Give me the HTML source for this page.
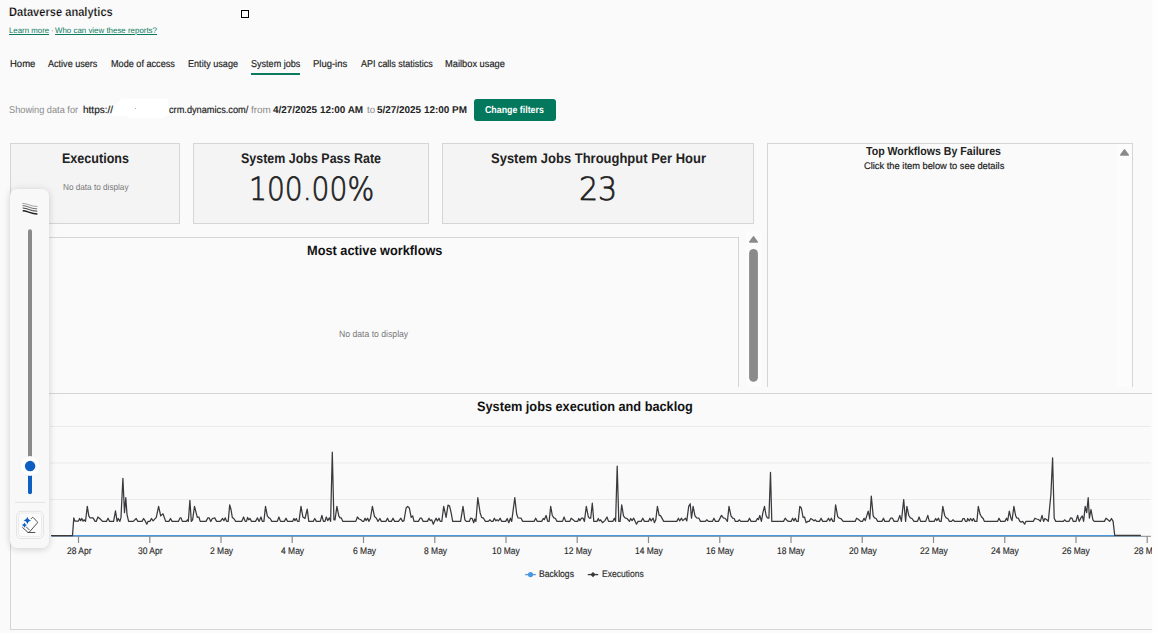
<!DOCTYPE html>
<html><head><meta charset="utf-8"><title>Dataverse analytics</title>
<style>
html,body{margin:0;padding:0;}
body{width:1158px;height:633px;overflow:hidden;background:#fefefe;font-family:"Liberation Sans",sans-serif;position:relative;}
#page{position:absolute;left:0;top:0;width:1152px;height:633px;background:#fafafa;overflow:hidden;}
.t{position:absolute;white-space:nowrap;line-height:1;transform-origin:0 0;}
.ax{font-size:9.6px;color:#2a2a2a;-webkit-text-stroke:0.15px #2a2a2a;}
#uline{position:absolute;left:251px;top:73px;width:49px;height:2px;background:#0b7a5e;}
#btn{position:absolute;left:474px;top:99px;width:82px;height:22px;background:#03785c;border-radius:3px;}
#sq{position:absolute;left:240px;top:9px;width:10px;height:10px;background:#fff;}
#sq i{position:absolute;left:1px;top:1px;width:6px;height:6px;border:1px solid #000;background:#fff;}
.card{position:absolute;top:143px;height:80.5px;background:#f4f4f4;border:1px solid #d5d5d5;box-sizing:border-box;}
.pan{position:absolute;box-sizing:border-box;border:1px solid #d5d5d5;background:#fafafa;}
#slider{position:absolute;left:10px;top:189px;width:39px;height:358.5px;border-radius:7px;background:#f8f8f8;box-shadow:0 0 10px rgba(0,0,0,.09),0 2px 6px rgba(0,0,0,.09);}
</style></head><body>
<div id="page">
<div id="sq"><i></i></div>
<div id="uline"></div>
<svg id="blob" width="70" height="26" viewBox="106 95 70 26" style="position:absolute;left:106px;top:95px"><path d="M122.8 98.9 L168 98.9 L168 105.8 L169.4 105.8 L169.4 115.5 L164.2 115.8 L164.2 117.7 L128 117.7 L127.3 115.8 L112.1 115.8 L112.1 107.5 L115.9 105.1 L118 102.4 L120.7 100.3 Z" fill="#fff" stroke="#fff" stroke-width="0.8" stroke-linejoin="round"/><rect x="135" y="108" width="1" height="1" fill="#7db4f2"/></svg>
<div id="btn"></div>

<div class="card" style="left:10px;width:170px"></div>
<div class="card" style="left:193px;width:236px"></div>
<div class="card" style="left:442px;width:312px"></div>

<div class="pan" id="maw" style="left:10px;top:237px;width:729px;height:150px;border-bottom:none;border-left:none"></div>
<div class="pan" id="twf" style="left:767px;top:143px;width:366px;height:244px;border-bottom:none"></div>
<div class="pan" id="chart" style="left:10px;top:393px;width:1160px;height:237px;border-right:none"></div>

<svg id="svg" width="1152" height="633" style="position:absolute;left:0;top:0">
<g stroke="#ebebeb" stroke-width="1">
<line x1="50" y1="426.5" x2="1151" y2="426.5"/><line x1="50" y1="463" x2="1151" y2="463"/><line x1="50" y1="499.5" x2="1151" y2="499.5"/>
</g>
<line x1="52" y1="536.3" x2="1151" y2="536.3" stroke="#8a8a8a" stroke-width="1"/>
<line x1="78.5" y1="536" x2="78.5" y2="543" stroke="#8a8a8a" stroke-width="1.2"/><line x1="149.8" y1="536" x2="149.8" y2="543" stroke="#8a8a8a" stroke-width="1.2"/><line x1="221.0" y1="536" x2="221.0" y2="543" stroke="#8a8a8a" stroke-width="1.2"/><line x1="292.2" y1="536" x2="292.2" y2="543" stroke="#8a8a8a" stroke-width="1.2"/><line x1="363.5" y1="536" x2="363.5" y2="543" stroke="#8a8a8a" stroke-width="1.2"/><line x1="434.8" y1="536" x2="434.8" y2="543" stroke="#8a8a8a" stroke-width="1.2"/><line x1="506.0" y1="536" x2="506.0" y2="543" stroke="#8a8a8a" stroke-width="1.2"/><line x1="577.2" y1="536" x2="577.2" y2="543" stroke="#8a8a8a" stroke-width="1.2"/><line x1="648.5" y1="536" x2="648.5" y2="543" stroke="#8a8a8a" stroke-width="1.2"/><line x1="719.8" y1="536" x2="719.8" y2="543" stroke="#8a8a8a" stroke-width="1.2"/><line x1="791.0" y1="536" x2="791.0" y2="543" stroke="#8a8a8a" stroke-width="1.2"/><line x1="862.2" y1="536" x2="862.2" y2="543" stroke="#8a8a8a" stroke-width="1.2"/><line x1="933.5" y1="536" x2="933.5" y2="543" stroke="#8a8a8a" stroke-width="1.2"/><line x1="1004.8" y1="536" x2="1004.8" y2="543" stroke="#8a8a8a" stroke-width="1.2"/><line x1="1076.0" y1="536" x2="1076.0" y2="543" stroke="#8a8a8a" stroke-width="1.2"/><line x1="1147.2" y1="536" x2="1147.2" y2="543" stroke="#8a8a8a" stroke-width="1.2"/>
<line x1="51" y1="535.7" x2="1141" y2="535.7" stroke="#4a98e0" stroke-width="1.3"/>
<polyline fill="none" stroke="#3a3a3e" stroke-width="1.25" stroke-linejoin="round" points="51,535.6 52.7,535.6 72.5,535.6 73.8,517.9 74.9,521.1 76.4,521.1 78.5,521.1 79.6,518.5 80.7,520.6 81.8,518.5 83.1,521.1 84.0,519.8 85.5,521.4 87.3,506.4 88.8,515.9 89.9,517.8 93.0,517.9 95.1,521.4 96.2,521.4 97.9,517.0 100.2,519.0 102.5,521.4 106.5,521.4 108.1,518.2 109.6,521.4 113.6,521.4 115.5,510.8 117.1,521.4 118.3,518.5 119.9,521.4 121.0,517.4 122.9,478.4 124.5,512.7 125.8,497.7 127.0,514.3 128.6,521.4 133.3,521.4 136.2,518.5 137.8,521.4 142.0,521.4 143.6,518.5 145.2,520.9 146.8,524.2 148.0,521.4 149.9,521.4 151.5,518.5 153.1,520.9 156.3,517.4 158.6,506.4 160.7,515.9 163.0,513.8 165.7,521.4 168.9,521.4 170.5,518.5 172.1,521.4 178.4,521.4 180.0,517.9 181.1,517.9 182.3,521.4 186.3,521.4 187.4,519.8 188.3,521.4 189.9,500.4 191.3,521.4 192.6,519.8 194.5,506.4 197.3,517.4 198.9,517.0 200.2,521.4 206.0,521.4 207.9,517.9 209.2,517.9 210.8,521.4 212.4,518.5 214.7,517.9 216.6,521.4 220.3,521.4 222.6,518.5 223.9,520.6 225.3,517.9 226.6,521.4 228.2,521.4 229.7,504.8 231.0,509.5 232.3,517.4 233.8,518.5 235.7,521.4 241.7,521.4 243.6,517.0 245.2,521.4 246.5,521.4 247.6,517.4 248.7,519.8 250.0,518.5 251.5,521.4 255.5,521.4 257.5,517.9 259.1,521.4 261.0,517.0 262.3,521.4 263.9,521.4 265.5,506.4 267.3,515.9 268.9,517.9 270.2,518.5 271.8,521.4 277.3,521.4 278.9,517.0 280.5,521.4 284.4,521.4 286.0,518.2 287.6,521.4 292.6,521.4 293.9,518.5 295.0,520.6 296.3,518.5 297.4,521.4 299.0,521.4 301.0,506.4 302.9,517.0 305.0,518.5 307.2,509.2 308.8,521.4 313.2,521.4 314.8,518.5 316.3,521.4 320.3,521.4 321.9,515.4 323.4,521.4 325.0,521.4 326.3,517.0 327.7,520.6 329.3,517.9 330.6,521.4 332.3,452.2 333.9,519.8 335.0,519.8 336.9,506.4 338.8,515.9 340.0,517.9 341.3,517.9 342.9,521.4 355.8,521.4 357.4,517.0 359.0,519.0 360.6,519.5 362.5,521.4 363.7,521.4 365.0,518.2 366.1,520.6 367.7,518.2 368.8,521.4 370.4,518.5 372.4,506.4 374.5,516.6 376.4,518.2 378.0,521.4 379.9,518.5 381.4,521.4 385.9,521.4 387.5,518.2 389.0,521.4 391.4,521.4 393.0,518.2 394.6,521.4 398.5,521.4 400.9,518.2 402.5,521.4 404.0,520.6 406.1,508.0 407.7,506.4 409.3,508.0 411.2,517.4 412.7,515.9 414.0,521.4 418.4,521.4 420.0,518.2 421.6,518.2 423.2,521.4 427.4,521.4 429.0,518.2 430.3,520.6 431.7,519.8 433.3,524.2 434.9,520.6 436.1,518.2 437.4,520.9 439.0,518.2 440.2,521.4 441.8,521.4 443.7,506.4 446.1,517.4 448.0,505.1 449.6,506.1 451.1,512.7 452.7,521.4 460.6,521.4 463.0,506.4 464.9,519.8 466.2,521.4 469.3,521.4 470.6,518.2 472.2,518.5 473.7,522.7 474.8,519.0 475.9,521.4 477.8,497.7 480.1,512.7 481.6,517.4 483.5,518.2 485.4,521.4 488.3,521.4 489.9,519.8 491.4,521.4 493.0,521.4 494.3,518.2 495.9,520.9 497.0,519.8 498.5,520.9 500.1,518.2 501.7,521.4 505.7,521.4 507.2,518.5 508.8,522.7 510.4,518.2 511.7,521.4 514.8,497.7 516.7,514.3 518.0,517.9 521.1,518.2 522.7,521.4 534.1,521.4 535.7,518.2 537.3,521.4 541.7,521.4 543.3,518.5 544.4,519.5 546.1,515.5 547.7,521.4 549.1,521.4 550.7,506.4 552.3,515.5 553.9,517.9 555.4,518.5 557.0,521.4 562.5,521.4 564.1,517.0 565.7,521.4 569.7,521.4 571.2,518.2 572.8,519.5 574.9,521.4 577.6,521.4 578.8,518.5 579.9,520.6 581.5,518.2 583.1,518.2 584.4,521.4 586.3,506.4 588.3,516.6 589.4,518.2 590.7,518.2 592.3,503.2 593.8,521.4 597.0,521.4 598.3,518.5 599.4,520.9 600.6,519.8 602.5,522.7 604.9,520.6 607.0,517.0 608.5,521.4 612.8,521.4 614.4,518.2 615.6,521.4 617.2,466.1 618.8,521.4 620.1,521.4 621.7,504.8 623.5,515.9 625.1,517.9 627.0,518.5 629.4,521.4 630.7,518.5 632.1,520.6 633.7,518.2 636.5,524.2 638.1,521.4 641.2,521.4 642.8,518.2 644.4,521.4 648.4,521.4 649.9,518.2 651.2,520.9 653.1,518.2 654.4,522.7 655.8,519.8 657.4,506.4 659.1,515.1 660.7,515.9 663.7,521.4 676.8,521.4 678.4,518.2 679.7,520.9 681.5,518.2 682.8,520.6 685.5,518.2 686.8,520.9 688.7,506.4 690.2,503.7 691.5,518.2 693.1,506.4 695.0,515.9 696.6,517.9 698.9,518.2 700.5,521.4 705.3,521.4 706.8,519.8 708.4,521.4 712.4,521.4 713.9,518.2 715.5,521.4 718.4,521.4 721.5,515.4 723.4,517.9 725.3,518.5 727.4,521.4 729.0,506.4 731.0,515.9 732.6,518.2 734.2,518.5 735.4,521.4 738.0,521.4 739.2,519.8 740.8,521.4 747.9,521.4 749.5,518.2 751.1,521.4 755.8,521.4 757.4,518.5 758.5,519.5 759.8,515.5 761.4,521.4 762.9,512.7 764.5,506.4 766.1,515.5 767.4,517.9 768.9,518.2 770.5,472.4 771.8,521.4 780.0,521.4 783.5,521.4 785.2,518.2 787.1,520.6 788.7,521.4 791.1,521.4 792.6,518.2 793.9,520.9 795.3,518.2 796.6,521.4 798.2,521.4 799.8,506.4 801.3,508.0 803.1,517.4 804.5,517.0 806.1,522.7 807.7,521.4 809.2,521.4 810.8,518.5 812.4,519.5 814.0,520.9 815.2,519.8 816.7,521.4 819.5,521.4 821.1,518.2 822.7,521.4 826.6,521.4 828.5,518.2 829.8,520.9 831.4,518.2 832.9,521.4 834.2,521.4 835.6,504.8 837.7,516.6 839.3,518.2 840.8,518.5 843.2,521.4 855.1,521.4 856.6,518.2 858.5,519.5 860.6,521.4 862.5,521.4 864.1,518.2 865.3,520.6 868.2,511.1 869.8,519.0 871.3,496.1 873.2,515.9 874.5,517.9 876.1,518.5 877.7,521.4 881.9,521.4 883.5,518.2 884.8,521.4 889.0,521.4 890.6,518.2 892.5,518.2 894.1,521.4 897.7,521.4 899.8,515.4 901.4,521.4 903.7,499.6 905.6,521.4 906.9,506.4 908.8,515.5 910.4,517.9 912.0,518.5 914.0,521.4 917.5,521.4 919.1,517.0 920.6,521.4 925.7,521.4 927.8,515.4 929.3,521.4 934.1,521.4 935.7,518.5 936.8,520.6 938.5,518.2 939.6,521.4 941.2,521.4 942.8,506.4 944.7,515.5 946.2,517.9 947.8,518.5 949.4,521.4 951.5,521.4 953.0,519.8 954.6,521.4 961.7,521.4 963.0,518.5 964.3,518.5 965.4,521.4 967.0,521.4 967.7,518.5 969.3,520.9 970.6,518.5 972.2,520.9 973.4,518.5 974.9,521.4 976.9,521.4 978.3,506.4 980.1,514.3 981.6,517.0 983.2,518.5 984.3,521.4 997.5,521.4 999.0,518.2 1000.6,521.4 1004.9,521.4 1006.5,518.2 1007.7,520.6 1009.3,511.1 1010.9,518.2 1012.0,520.6 1013.9,506.4 1015.6,515.5 1016.7,517.9 1018.3,518.2 1019.9,521.4 1021.2,522.2 1022.7,521.4 1024.6,524.2 1025.9,521.4 1033.3,521.4 1034.9,518.2 1036.5,519.0 1038.5,519.5 1040.4,521.4 1042.0,515.4 1043.6,521.4 1044.9,518.5 1046.8,519.8 1048.3,521.4 1050.9,494.5 1052.6,457.9 1054.2,518.2 1055.8,521.4 1063.3,521.4 1064.6,519.8 1066.2,521.4 1068.9,521.4 1070.5,517.9 1072.0,518.2 1073.3,521.4 1076.0,521.4 1077.6,515.4 1079.2,521.4 1080.7,518.2 1082.3,515.9 1083.6,521.4 1085.2,506.4 1086.7,512.7 1088.2,497.7 1089.4,518.2 1091.0,509.5 1092.9,519.8 1094.2,521.4 1104.4,521.4 1106.0,518.2 1107.6,519.5 1109.7,521.4 1111.5,518.5 1113.1,521.4 1114.7,535.3 1140.8,535.3"/>
<rect x="746" y="231" width="15" height="156" fill="#fcfcfc"/>
<rect x="1117" y="144" width="15" height="243" fill="#fcfcfc"/>
<g fill="#8a8a8a" stroke="#8a8a8a" stroke-width="1.6" stroke-linejoin="round">
<path d="M749.8 242 L753.5 236.9 L757.2 242 Z"/>
<path d="M1120.8 155 L1124.5 149.9 L1128.2 155 Z"/>
</g>
<rect x="749.1" y="249" width="8.8" height="132.8" rx="4.4" fill="#8a8a8a"/>
<line x1="525.2" y1="574.6" x2="535.8" y2="574.6" stroke="#4a98e0" stroke-width="1.3"/><circle cx="530.5" cy="574.6" r="2.6" fill="#4a98e0"/>
<line x1="587.8" y1="574.6" x2="598.2" y2="574.6" stroke="#3a3a3e" stroke-width="1.3"/><path d="M593 572 L595.6 574.6 L593 577.2 L590.4 574.6 Z" fill="#3a3a3e"/>
</svg>

<div class="t" id="title" style="left:8.90px;top:5.92px;font-size:12.5px;font-weight:bold;color:#0c0c0c;-webkit-text-stroke:0.22px #fafafa;transform:scaleX(0.8889) rotate(.03deg)">Dataverse analytics</div>
<div class="t" id="l1" style="left:8.50px;top:26.63px;font-size:8px;font-weight:normal;color:#0b7a5e;text-decoration:underline;transform:scaleX(0.9806) rotate(.03deg)">Learn more</div>
<div class="t" id="ldot" style="left:50.80px;top:26.63px;font-size:8px;font-weight:normal;color:#555;transform:scaleX(1.0000) rotate(.03deg)">·</div>
<div class="t" id="l2" style="left:55.30px;top:26.63px;font-size:8px;font-weight:normal;color:#0b7a5e;text-decoration:underline;transform:scaleX(0.9884) rotate(.03deg)">Who can view these reports?</div>
<div class="t" id="tab1" style="left:10.30px;top:58.63px;font-size:10.0px;font-weight:normal;color:#1c1c1c;-webkit-text-stroke:0.18px #1c1c1c;transform:scaleX(0.9506) rotate(.03deg)">Home</div>
<div class="t" id="tab2" style="left:47.90px;top:58.63px;font-size:10.0px;font-weight:normal;color:#1c1c1c;-webkit-text-stroke:0.18px #1c1c1c;transform:scaleX(0.9060) rotate(.03deg)">Active users</div>
<div class="t" id="tab3" style="left:111.10px;top:58.63px;font-size:10.0px;font-weight:normal;color:#1c1c1c;-webkit-text-stroke:0.18px #1c1c1c;transform:scaleX(0.9116) rotate(.03deg)">Mode of access</div>
<div class="t" id="tab4" style="left:188.10px;top:58.63px;font-size:10.0px;font-weight:normal;color:#1c1c1c;-webkit-text-stroke:0.18px #1c1c1c;transform:scaleX(0.9093) rotate(.03deg)">Entity usage</div>
<div class="t" id="tab5" style="left:251.10px;top:58.63px;font-size:10.0px;font-weight:normal;color:#1c1c1c;-webkit-text-stroke:0.18px #1c1c1c;transform:scaleX(0.9060) rotate(.03deg)">System jobs</div>
<div class="t" id="tab6" style="left:312.90px;top:58.63px;font-size:10.0px;font-weight:normal;color:#1c1c1c;-webkit-text-stroke:0.18px #1c1c1c;transform:scaleX(0.9450) rotate(.03deg)">Plug-ins</div>
<div class="t" id="tab7" style="left:360.50px;top:58.63px;font-size:10.0px;font-weight:normal;color:#1c1c1c;-webkit-text-stroke:0.18px #1c1c1c;transform:scaleX(0.8951) rotate(.03deg)">API calls statistics</div>
<div class="t" id="tab8" style="left:445.10px;top:58.63px;font-size:10.0px;font-weight:normal;color:#1c1c1c;-webkit-text-stroke:0.18px #1c1c1c;transform:scaleX(0.9296) rotate(.03deg)">Mailbox usage</div>
<div class="t" id="f1" style="left:9.30px;top:105.22px;font-size:9.9px;font-weight:normal;color:#8a8a8a;transform:scaleX(0.9324) rotate(.03deg)">Showing data for</div>
<div class="t" id="f2" style="left:82.50px;top:105.22px;font-size:9.9px;font-weight:normal;color:#1c1c1c;-webkit-text-stroke:0.18px #1c1c1c;transform:scaleX(1.0145) rotate(.03deg)">https://</div>
<div class="t" id="f3" style="left:169.30px;top:105.22px;font-size:9.9px;font-weight:normal;color:#1c1c1c;-webkit-text-stroke:0.18px #1c1c1c;transform:scaleX(0.9318) rotate(.03deg)">crm.dynamics.com/</div>
<div class="t" id="f4" style="left:250.90px;top:105.22px;font-size:9.9px;font-weight:normal;color:#8a8a8a;transform:scaleX(1.0056) rotate(.03deg)">from</div>
<div class="t" id="f5" style="left:272.90px;top:105.22px;font-size:9.9px;font-weight:bold;color:#242424;transform:scaleX(1.0046) rotate(.03deg)">4/27/2025 12:00 AM</div>
<div class="t" id="f6" style="left:366.70px;top:105.22px;font-size:9.9px;font-weight:normal;color:#8a8a8a;transform:scaleX(0.9760) rotate(.03deg)">to</div>
<div class="t" id="f7" style="left:376.90px;top:105.22px;font-size:9.9px;font-weight:bold;color:#242424;transform:scaleX(1.0046) rotate(.03deg)">5/27/2025 12:00 PM</div>
<div class="t" id="btnt" style="left:484.70px;top:105.12px;font-size:9.9px;font-weight:bold;color:#ffffff;transform:scaleX(0.8940) rotate(.03deg)">Change filters</div>
<div class="t" id="c1t" style="left:62.00px;top:151.15px;font-size:14px;font-weight:bold;color:#222;transform:scaleX(0.8973) rotate(.03deg)">Executions</div>
<div class="t" id="c1n" style="left:62.70px;top:182.55px;font-size:8.8px;font-weight:normal;color:#777;transform:scaleX(0.9298) rotate(.03deg)">No data to display</div>
<div class="t" id="c2t" style="left:240.90px;top:151.15px;font-size:14px;font-weight:bold;color:#222;transform:scaleX(0.8905) rotate(.03deg)">System Jobs Pass Rate</div>
<div class="t" id="c2v" style="left:248.64px;top:172.51px;font-size:32px;font-weight:200;color:#222;font-family:'DejaVu Sans Light','DejaVu Sans',sans-serif;-webkit-text-stroke:0.72px #1f1f1f;transform:scaleX(0.8789) rotate(.03deg)">100.00%</div>
<div class="t" id="c3t" style="left:491.10px;top:151.15px;font-size:14px;font-weight:bold;color:#222;transform:scaleX(0.9276) rotate(.03deg)">System Jobs Throughput Per Hour</div>
<div class="t" id="c3v" style="left:579.21px;top:172.51px;font-size:32px;font-weight:200;color:#222;font-family:'DejaVu Sans Light','DejaVu Sans',sans-serif;-webkit-text-stroke:0.72px #1f1f1f;transform:scaleX(0.9392) rotate(.03deg)">23</div>
<div class="t" id="mawt" style="left:306.80px;top:244.29px;font-size:13.6px;font-weight:bold;color:#111;transform:scaleX(0.9389) rotate(.03deg)">Most active workflows</div>
<div class="t" id="mawn" style="left:339.10px;top:330.11px;font-size:9.2px;font-weight:normal;color:#777;transform:scaleX(0.9406) rotate(.03deg)">No data to display</div>
<div class="t" id="twft" style="left:865.70px;top:144.70px;font-size:11.7px;font-weight:bold;color:#222;transform:scaleX(0.9061) rotate(.03deg)">Top Workflows By Failures</div>
<div class="t" id="twfs" style="left:863.70px;top:161.27px;font-size:9.6px;font-weight:normal;color:#222;-webkit-text-stroke:0.18px #222;transform:scaleX(0.9711) rotate(.03deg)">Click the item below to see details</div>
<div class="t" id="cht" style="left:477.30px;top:400.29px;font-size:13.6px;font-weight:bold;color:#111;transform:scaleX(0.9365) rotate(.03deg)">System jobs execution and backlog</div>
<div class="t" id="lg1" style="left:538.90px;top:568.67px;font-size:9.6px;font-weight:normal;color:#2a2a2a;-webkit-text-stroke:0.18px #2a2a2a;transform:scaleX(0.8979) rotate(.03deg)">Backlogs</div>
<div class="t" id="lg2" style="left:601.70px;top:568.67px;font-size:9.6px;font-weight:normal;color:#333;-webkit-text-stroke:0.18px #333;transform:scaleX(0.8894) rotate(.03deg)">Executions</div>

<div class="t ax" id="ax0" style="left:66.71px;top:546.17px;transform:scaleX(0.885) rotate(.03deg)">28 Apr</div>
<div class="t ax" id="ax1" style="left:137.96px;top:546.17px;transform:scaleX(0.885) rotate(.03deg)">30 Apr</div>
<div class="t ax" id="ax2" style="left:210.09px;top:546.17px;transform:scaleX(0.885) rotate(.03deg)">2 May</div>
<div class="t ax" id="ax3" style="left:281.35px;top:546.17px;transform:scaleX(0.885) rotate(.03deg)">4 May</div>
<div class="t ax" id="ax4" style="left:352.60px;top:546.17px;transform:scaleX(0.885) rotate(.03deg)">6 May</div>
<div class="t ax" id="ax5" style="left:423.85px;top:546.17px;transform:scaleX(0.885) rotate(.03deg)">8 May</div>
<div class="t ax" id="ax6" style="left:492.44px;top:546.17px;transform:scaleX(0.885) rotate(.03deg)">10 May</div>
<div class="t ax" id="ax7" style="left:563.69px;top:546.17px;transform:scaleX(0.885) rotate(.03deg)">12 May</div>
<div class="t ax" id="ax8" style="left:634.94px;top:546.17px;transform:scaleX(0.885) rotate(.03deg)">14 May</div>
<div class="t ax" id="ax9" style="left:706.19px;top:546.17px;transform:scaleX(0.885) rotate(.03deg)">16 May</div>
<div class="t ax" id="ax10" style="left:777.44px;top:546.17px;transform:scaleX(0.885) rotate(.03deg)">18 May</div>
<div class="t ax" id="ax11" style="left:848.69px;top:546.17px;transform:scaleX(0.885) rotate(.03deg)">20 May</div>
<div class="t ax" id="ax12" style="left:919.94px;top:546.17px;transform:scaleX(0.885) rotate(.03deg)">22 May</div>
<div class="t ax" id="ax13" style="left:991.19px;top:546.17px;transform:scaleX(0.885) rotate(.03deg)">24 May</div>
<div class="t ax" id="ax14" style="left:1062.44px;top:546.17px;transform:scaleX(0.885) rotate(.03deg)">26 May</div>
<div class="t ax" id="ax15" style="left:1133.69px;top:546.17px;transform:scaleX(0.885) rotate(.03deg)">28 May</div>


<div id="slider"></div>
<svg id="ssvg" width="60" height="633" style="position:absolute;left:0;top:0">
<g fill="none" stroke="#222" stroke-linecap="butt">
<path d="M22.3 203.4 C27.5 203.4 30.5 206.5 37.4 206.5" stroke-width="0.4"/>
<path d="M22.5 205.6 C27.5 205.6 30.5 208.9 37.2 208.9" stroke-width="0.65"/>
<path d="M22.7 208 C27.5 208 30.5 211.2 37.2 211.2" stroke-width="0.9"/>
<path d="M22.7 210.7 C27.5 210.7 30.5 213.9 37.4 213.9" stroke-width="1.45"/>
</g>
<rect x="28" y="229.3" width="4" height="230" rx="2" fill="#8a8a8a"/>
<rect x="28" y="470" width="4" height="24.3" rx="2" fill="#0f5fc3"/>
<circle cx="30" cy="466" r="10" fill="#fff" stroke="rgba(0,0,0,.05)" stroke-width="0.6"/>
<circle cx="30.1" cy="466.1" r="5.25" fill="#0f5fc3"/>
<line x1="15" y1="502.4" x2="45" y2="502.4" stroke="#e4e4e4" stroke-width="1"/>
<rect x="16.6" y="511.3" width="26.8" height="27.2" rx="4.5" fill="#fbfbfb" stroke="#e0e0e0" stroke-width="0.9"/>
<rect x="18.5" y="513" width="23" height="23.7" rx="3.5" fill="none" stroke="#e9e9e9" stroke-width="0.9"/>
<g fill="none" stroke="#4a4a4a" stroke-width="0.95" stroke-linejoin="round" stroke-linecap="round">
<path d="M31.3 518.6 L32.3 517.5 Q32.8 517.1 33.3 517.6 L37.2 521.7 Q37.8 522.4 37.2 523.1 L29.5 531.9 Q28.6 532.9 27.6 532 L22.6 527.6"/>
<path d="M26.3 526.9 L29.2 529.8"/>
<path d="M28 532.5 L34.9 532.5"/>
</g>
<path d="M27.4 516.70 Q28.05 519.85 31.20 520.5 Q28.05 521.15 27.4 524.30 Q26.75 521.15 23.60 520.5 Q26.75 519.85 27.4 516.70Z" fill="#0f5fc3"/>
<path d="M24.4 522.50 Q24.92 524.58 27.00 525.1 Q24.92 525.62 24.4 527.70 Q23.88 525.62 21.80 525.1 Q23.88 524.58 24.4 522.50Z" fill="#0f5fc3"/>
</svg>
</div>
</body></html>
